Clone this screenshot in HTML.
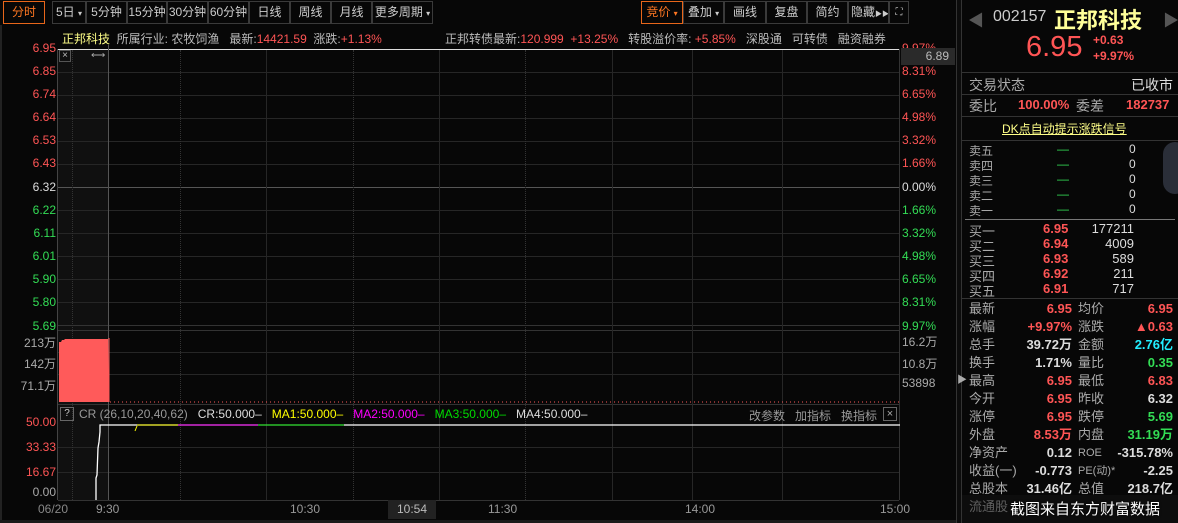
<!DOCTYPE html>
<html><head><meta charset="utf-8"><style>
*{margin:0;padding:0;box-sizing:border-box}
body{width:1178px;height:523px;background:#070707;overflow:hidden;position:relative;font-family:"Liberation Sans","Noto Sans CJK SC",sans-serif;font-size:12px;color:#bbb}
.a{position:absolute;white-space:nowrap}
.btn{position:absolute;top:1px;height:23px;border:1px solid #3a3a3a;color:#ccc;text-align:center;line-height:21px;font-size:12px;white-space:nowrap;overflow:hidden}
.r{color:#ff5555}.g{color:#33dd55}.y{color:#ffff88}.w{color:#ddd}.gr{color:#aaa}
.hl{position:absolute;height:1px;background:#262626}
.vl{position:absolute;width:1px;background:#262626}
.vd{position:absolute;width:0;border-left:1px dotted #333}
.lab{position:absolute;right:1122px;font-size:12px;text-align:right}
.pl{position:absolute;left:902px;font-size:12px}
.row{position:absolute;left:969px;width:206px;height:15px;font-size:12px}
.row span{position:absolute;white-space:nowrap}
.st{position:absolute;left:969px;width:206px;height:18px;font-size:13px;line-height:18px}
.st span{position:absolute;white-space:nowrap}
.st .v1{right:103px;font-weight:bold}
.st .l2{left:109px;color:#aaa}
.st .v2{right:2px;font-weight:bold}
</style></head><body>
<!-- toolbar -->
<div class="btn" style="left:3px;width:42px;border-color:#e8661a;color:#ff7722">分时</div>
<div class="btn" style="left:52px;width:34px">5日 <span style="font-size:8px">▾</span></div>
<div class="btn" style="left:86px;width:41px">5分钟</div>
<div class="btn" style="left:127px;width:40px">15分钟</div>
<div class="btn" style="left:167px;width:41px">30分钟</div>
<div class="btn" style="left:208px;width:41px">60分钟</div>
<div class="btn" style="left:249px;width:41px">日线</div>
<div class="btn" style="left:290px;width:41px">周线</div>
<div class="btn" style="left:331px;width:41px">月线</div>
<div class="btn" style="left:372px;width:61px">更多周期 <span style="font-size:8px">▾</span></div>
<div class="btn" style="left:641px;width:42px;border-color:#e8661a;color:#ff7722">竞价 <span style="font-size:8px">▾</span></div>
<div class="btn" style="left:683px;width:41px">叠加 <span style="font-size:8px">▾</span></div>
<div class="btn" style="left:724px;width:42px">画线</div>
<div class="btn" style="left:766px;width:41px">复盘</div>
<div class="btn" style="left:807px;width:41px">简约</div>
<div class="btn" style="left:848px;width:41px;text-align:left;padding-left:2px">隐藏<span style="font-size:7px">▶▶</span></div>
<div class="btn" style="left:889px;width:20px;font-size:10px">⛶</div>
<div class="a" style="left:0;top:25px;width:2px;height:498px;background:#222"></div>
<!-- info line -->
<div class="a" style="left:62px;top:30px"><span class="y">正邦科技</span>&nbsp; 所属行业: 农牧饲渔 &nbsp; 最新:<span class="r">14421.59</span> &nbsp;涨跌:<span class="r">+1.13%</span></div>
<div class="a" style="left:445px;top:30px">正邦转债最新:<span class="r">120.999</span> &nbsp;<span class="r">+13.25%</span> &nbsp; 转股溢价率: <span class="r">+5.85%</span> &nbsp; 深股通 &nbsp; 可转债 &nbsp; 融资融券</div>
<!-- main chart -->
<div class="a" style="left:58px;top:49px;width:50px;height:451px;background:#101010"></div>
<div class="a" style="left:58px;top:49px;width:842px;height:1px;background:#ddd"></div>
<div class="vl" style="left:57px;top:49px;height:451px;background:#444"></div>
<div class="vl" style="left:899px;top:49px;height:451px;background:#333"></div>
<div class="hl" style="left:58px;top:72px;width:841px"></div>
<div class="hl" style="left:58px;top:95px;width:841px"></div>
<div class="hl" style="left:58px;top:118px;width:841px"></div>
<div class="hl" style="left:58px;top:141px;width:841px"></div>
<div class="hl" style="left:58px;top:164px;width:841px"></div>
<div class="hl" style="left:58px;top:187px;width:841px;background:#555"></div>
<div class="hl" style="left:58px;top:210px;width:841px"></div>
<div class="hl" style="left:58px;top:233px;width:841px"></div>
<div class="hl" style="left:58px;top:256px;width:841px"></div>
<div class="hl" style="left:58px;top:279px;width:841px"></div>
<div class="hl" style="left:58px;top:302px;width:841px"></div>
<div class="hl" style="left:58px;top:325px;width:841px;background:#333"></div>
<div class="hl" style="left:58px;top:330px;width:841px;background:#333"></div>
<div class="hl" style="left:58px;top:352px;width:841px"></div>
<div class="hl" style="left:58px;top:374px;width:841px"></div>
<div class="hl" style="left:58px;top:404px;width:841px;background:#333"></div>
<div class="hl" style="left:58px;top:447px;width:841px"></div>
<div class="hl" style="left:58px;top:472px;width:841px"></div>
<div class="hl" style="left:58px;top:500px;width:841px;background:#333"></div>
<div class="vd" style="left:72px;top:50px;height:450px"></div>
<div class="vd" style="left:180px;top:50px;height:450px"></div>
<div class="vl" style="left:266px;top:50px;height:450px"></div>
<div class="vd" style="left:353px;top:50px;height:450px"></div>
<div class="vl" style="left:439px;top:50px;height:450px"></div>
<div class="vd" style="left:525px;top:50px;height:450px"></div>
<div class="vl" style="left:612px;top:50px;height:450px"></div>
<div class="vl" style="left:692px;top:50px;height:450px"></div>
<div class="vl" style="left:782px;top:50px;height:450px"></div>
<div class="vl" style="left:108px;top:45px;height:455px;background:#555"></div>
<div class="a" style="left:59px;top:50px;width:12px;height:12px;border:1px solid #555;color:#bbb;font-size:10px;line-height:10px;text-align:center">×</div>
<div class="a" style="left:91px;top:50px;font-size:10px;color:#aaa">⟷</div>
<!-- left labels -->
<div class="lab r" style="top:41px">6.95</div>
<div class="lab r" style="top:64px">6.85</div>
<div class="lab r" style="top:87px">6.74</div>
<div class="lab r" style="top:110px">6.64</div>
<div class="lab r" style="top:133px">6.53</div>
<div class="lab r" style="top:156px">6.43</div>
<div class="lab w" style="top:180px">6.32</div>
<div class="lab g" style="top:203px">6.22</div>
<div class="lab g" style="top:226px">6.11</div>
<div class="lab g" style="top:249px">6.01</div>
<div class="lab g" style="top:272px">5.90</div>
<div class="lab g" style="top:295px">5.80</div>
<div class="lab g" style="top:319px">5.69</div>
<!-- right labels -->
<div class="pl r" style="top:41px">9.97%</div>
<div class="a" style="left:901px;top:48px;width:54px;height:17px;background:#2a2a2a;color:#bbb;text-align:right;padding-right:6px;line-height:17px">6.89</div>
<div class="pl r" style="top:64px">8.31%</div>
<div class="pl r" style="top:87px">6.65%</div>
<div class="pl r" style="top:110px">4.98%</div>
<div class="pl r" style="top:133px">3.32%</div>
<div class="pl r" style="top:156px">1.66%</div>
<div class="pl w" style="top:180px">0.00%</div>
<div class="pl g" style="top:203px">1.66%</div>
<div class="pl g" style="top:226px">3.32%</div>
<div class="pl g" style="top:249px">4.98%</div>
<div class="pl g" style="top:272px">6.65%</div>
<div class="pl g" style="top:295px">8.31%</div>
<div class="pl g" style="top:319px">9.97%</div>
<div class="pl gr" style="top:333px">16.2万</div>
<div class="pl gr" style="top:355px">10.8万</div>
<div class="pl gr" style="top:376px">53898</div>
<!-- volume -->
<div class="lab gr" style="top:334px">213万</div>
<div class="lab gr" style="top:355px">142万</div>
<div class="lab gr" style="top:377px">71.1万</div>
<svg class="a" style="left:58px;top:336px" width="842" height="70">
<path d="M1 36 L1 6 L3 6 L4 4 L6 4 L7 3 L50 3 L50 4 L51 66 L1 66Z" fill="#ff5a5a"/>
<rect x="3" y="30" width="46" height="33" fill="#101010" opacity="0"/>
<line x1="51" y1="2" x2="51" y2="66" stroke="#ff5a5a"/>
<line x1="49" y1="40" x2="49" y2="66" stroke="#ff5a5a"/>
<line x1="52" y1="66" x2="842" y2="66" stroke="#ff5a5a" stroke-dasharray="1 3"/>
</svg>
<!-- indicator header -->
<div class="a" style="left:60px;top:407px;width:14px;height:14px;border:1px solid #666;font-size:10px;text-align:center;line-height:12px;color:#ccc">?</div>
<div class="a" style="left:79px;top:407px;color:#999">CR (26,10,20,40,62) &nbsp; <span class="w">CR:50.000–</span> &nbsp; <span style="color:#ffff00">MA1:50.000–</span> &nbsp; <span style="color:#ff00ff">MA2:50.000–</span> &nbsp; <span style="color:#00dd00">MA3:50.000–</span> &nbsp; <span class="w">MA4:50.000–</span></div>
<div class="a" style="left:749px;top:407px;color:#999">改参数 &nbsp; 加指标 &nbsp; 换指标</div>
<div class="a" style="left:883px;top:407px;width:14px;height:14px;border:1px solid #666;font-size:11px;text-align:center;line-height:12px;color:#aaa">×</div>
<div class="lab r" style="top:415px">50.00</div>
<div class="lab r" style="top:440px">33.33</div>
<div class="lab r" style="top:465px">16.67</div>
<div class="lab gr" style="top:485px">0.00</div>
<svg class="a" style="left:58px;top:420px" width="842" height="80">
<path d="M38 80 L38 58 L39 55 L40 28 L41 22 L42 12 L42 5 L52 5 L842 5" fill="none" stroke="#fff" stroke-width="1.3"/>
<line x1="79" y1="5" x2="120" y2="5" stroke="#ffff00"/><line x1="77" y1="11" x2="79" y2="6" stroke="#ffff00"/>
<line x1="120" y1="5" x2="200" y2="5" stroke="#ff00ff"/>
<line x1="200" y1="5" x2="286" y2="5" stroke="#00dd00"/>
<line x1="286" y1="5" x2="842" y2="5" stroke="#fff"/>
</svg>
<!-- time axis -->
<div class="a" style="left:38px;top:502px;color:#888">06/20</div>
<div class="a" style="left:96px;top:502px;color:#999">9:30</div>
<div class="a" style="left:290px;top:502px;color:#999">10:30</div>
<div class="a" style="left:388px;top:500px;width:48px;height:19px;background:#222;color:#bbb;text-align:center;line-height:19px">10:54</div>
<div class="a" style="left:488px;top:502px;color:#999">11:30</div>
<div class="a" style="left:685px;top:502px;color:#999">14:00</div>
<div class="a" style="left:880px;top:502px;color:#999">15:00</div>
<div class="a" style="left:0;top:520px;width:960px;height:3px;background:#1a1a1a"></div>
<!-- separator -->
<div class="a" style="left:956px;top:0;width:6px;height:523px;background:#0c0c0c;border-left:1px solid #333;border-right:1px solid #333"></div>
<div class="a" style="left:957px;top:371px;color:#aaa;font-size:10px">▶</div>
<!-- right panel -->
<div class="a" style="left:968px;top:7px;color:#555;font-size:16px">◀</div>
<div class="a" style="left:1163px;top:7px;color:#555;font-size:16px">▶</div>
<div class="a" style="left:993px;top:8px;color:#ccc;font-size:16px">002157</div>
<div class="a" style="left:1054px;top:3px;color:#ffff99;font-size:22px;font-weight:bold">正邦科技</div>
<div class="a r" style="left:1026px;top:31px;font-size:29px">6.95</div>
<div class="a r" style="left:1093px;top:33px;font-weight:bold">+0.63</div>
<div class="a r" style="left:1093px;top:49px;font-weight:bold">+9.97%</div>
<div class="hl" style="left:962px;top:72px;width:216px;background:#333"></div>
<div class="a gr" style="left:969px;top:75px;font-size:14px">交易状态</div>
<div class="a w" style="left:1131px;top:75px;font-size:14px">已收市</div>
<div class="hl" style="left:962px;top:94px;width:216px;background:#333"></div>
<div class="a gr" style="left:969px;top:96px;font-size:14px">委比</div>
<div class="a r" style="left:1018px;top:97px;font-weight:bold;font-size:13px">100.00%</div>
<div class="a gr" style="left:1076px;top:96px;font-size:14px">委差</div>
<div class="a r" style="left:1126px;top:97px;font-weight:bold;font-size:13px">182737</div>
<div class="hl" style="left:962px;top:116px;width:216px;background:#333"></div>
<div class="a" style="left:1002px;top:120px;color:#ffff88;text-decoration:underline">DK点自动提示涨跌信号</div>
<div class="hl" style="left:962px;top:140px;width:216px;background:#333"></div>
<div class="row" style="top:142px"><span class="gr">卖五</span><span class="g" style="left:88px">—</span><span class="w" style="left:160px">0</span></div>
<div class="row" style="top:157px"><span class="gr">卖四</span><span class="g" style="left:88px">—</span><span class="w" style="left:160px">0</span></div>
<div class="row" style="top:172px"><span class="gr">卖三</span><span class="g" style="left:88px">—</span><span class="w" style="left:160px">0</span></div>
<div class="row" style="top:187px"><span class="gr">卖二</span><span class="g" style="left:88px">—</span><span class="w" style="left:160px">0</span></div>
<div class="row" style="top:202px"><span class="gr">卖一</span><span class="g" style="left:88px">—</span><span class="w" style="left:160px">0</span></div>
<div class="a" style="left:1163px;top:142px;width:24px;height:52px;border-radius:26px;background:#2a2e38"></div>
<div class="hl" style="left:965px;top:219px;width:210px;background:#777"></div>
<div class="row" style="top:221px;font-size:13px"><span class="gr">买一</span><span class="r" style="left:74px;font-weight:bold">6.95</span><span class="w" style="right:41px">177211</span></div>
<div class="row" style="top:236px;font-size:13px"><span class="gr">买二</span><span class="r" style="left:74px;font-weight:bold">6.94</span><span class="w" style="right:41px">4009</span></div>
<div class="row" style="top:251px;font-size:13px"><span class="gr">买三</span><span class="r" style="left:74px;font-weight:bold">6.93</span><span class="w" style="right:41px">589</span></div>
<div class="row" style="top:266px;font-size:13px"><span class="gr">买四</span><span class="r" style="left:74px;font-weight:bold">6.92</span><span class="w" style="right:41px">211</span></div>
<div class="row" style="top:281px;font-size:13px"><span class="gr">买五</span><span class="r" style="left:74px;font-weight:bold">6.91</span><span class="w" style="right:41px">717</span></div>
<div class="hl" style="left:962px;top:298px;width:216px;background:#333"></div>
<div class="st" style="top:300px"><span class="gr">最新</span><span class="v1 r">6.95</span><span class="l2">均价</span><span class="v2 r">6.95</span></div>
<div class="st" style="top:318px"><span class="gr">涨幅</span><span class="v1 r">+9.97%</span><span class="l2">涨跌</span><span class="v2 r">▲0.63</span></div>
<div class="st" style="top:336px"><span class="gr">总手</span><span class="v1 w">39.72万</span><span class="l2">金额</span><span class="v2" style="color:#22eeff">2.76亿</span></div>
<div class="st" style="top:354px"><span class="gr">换手</span><span class="v1 w">1.71%</span><span class="l2">量比</span><span class="v2 g">0.35</span></div>
<div class="st" style="top:372px"><span class="gr">最高</span><span class="v1 r">6.95</span><span class="l2">最低</span><span class="v2 r">6.83</span></div>
<div class="st" style="top:390px"><span class="gr">今开</span><span class="v1 r">6.95</span><span class="l2">昨收</span><span class="v2 w">6.32</span></div>
<div class="st" style="top:408px"><span class="gr">涨停</span><span class="v1 r">6.95</span><span class="l2">跌停</span><span class="v2 g">5.69</span></div>
<div class="st" style="top:426px"><span class="gr">外盘</span><span class="v1 r">8.53万</span><span class="l2">内盘</span><span class="v2 g">31.19万</span></div>
<div class="st" style="top:444px"><span class="gr">净资产</span><span class="v1 w">0.12</span><span class="l2" style="font-size:11px">ROE</span><span class="v2 w">-315.78%</span></div>
<div class="st" style="top:462px"><span class="gr">收益(一)</span><span class="v1 w">-0.773</span><span class="l2" style="font-size:11px">PE(动)*</span><span class="v2 w">-2.25</span></div>
<div class="st" style="top:480px"><span class="gr">总股本</span><span class="v1 w">31.46亿</span><span class="l2">总值</span><span class="v2 w">218.7亿</span></div>
<div class="st" style="top:498px"><span class="gr">流通股</span></div>
<div class="a" style="left:962px;top:495px;width:216px;height:28px;background:rgba(20,20,20,0.5)"></div>
<div class="a" style="left:1010px;top:498px;color:#fff;font-size:15px;text-shadow:0 0 2px #000">截图来自东方财富数据</div>
</body></html>
